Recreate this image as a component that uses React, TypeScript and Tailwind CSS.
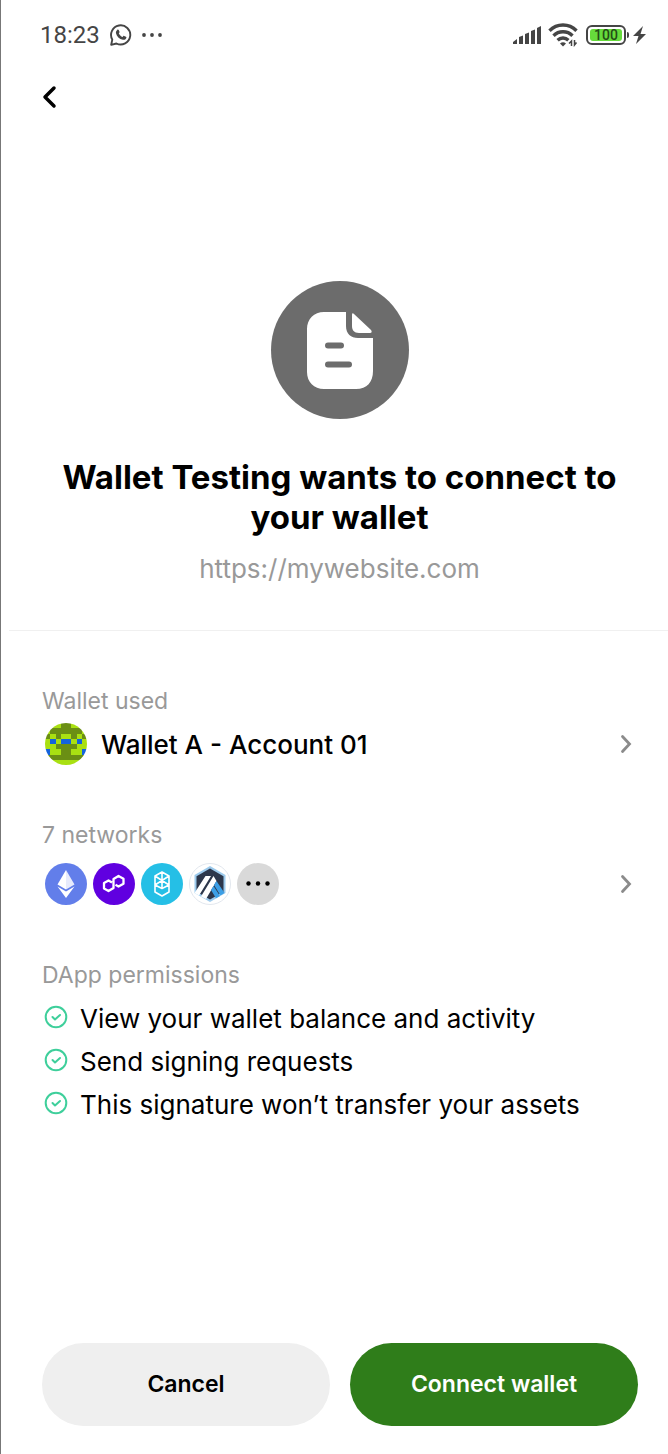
import type { ReactNode } from "react";

const permissions = [
  "View your wallet balance and activity",
  "Send signing requests",
  "This signature won’t transfer your assets",
];

// one letter per blockie pixel: l = light, d = dark, b = blue
const blockie = [
  "lllddlll",
  "lddddddl",
  "dldlldld",
  "lblbblbl",
  "llddddll",
  "bllddllb",
  "dddddddd",
  "llllllll",
];

const blockieColors: Record<string, string> = {
  l: "#a9e012",
  d: "#6b8f14",
  b: "#1463dc",
};

function StatusBar() {
  return (
    <div className="flex h-[70px] items-center justify-between pl-[39px] pr-[22px] text-[#454545]">
      <div className="flex items-center gap-2.5">
        <span className="font-[Roboto] text-[24px] leading-7">18:23</span>
        <svg width="22" height="22" viewBox="0 0 22 22" fill="none" aria-hidden="true">
          <path
            d="M1.2 20.8 2.3 15.6A9.6 9.6 0 1 1 6.4 19.5Z"
            stroke="currentColor"
            strokeWidth="1.9"
            strokeLinejoin="round"
          />
          <path
            d="M7.2 5.9c.5-.5 1.2-.4 1.5.2l.8 1.7c.2.4 0 .8-.7 1.6.8 1.6 2 2.7 3.8 3.6.8-1 1-1.3 1.5-1.1l1.8.9c.6.3.6.6.4 1.2-.5 1.4-2 2.1-3.4 1.8-3.7-.8-6.2-3.4-6.9-6.6-.3-1.4.2-2.5 1.2-3.3Z"
            fill="currentColor"
          />
        </svg>
        <svg width="20" height="4" viewBox="0 0 20 4" fill="currentColor" aria-hidden="true">
          <circle cx="2" cy="2" r="1.9" />
          <circle cx="10" cy="2" r="1.9" />
          <circle cx="18" cy="2" r="1.9" />
        </svg>
      </div>

      <div className="flex items-center">
        <svg width="30" height="20" viewBox="0 0 30 20" fill="currentColor" aria-hidden="true">
          <path d="M1 19v-2l4-3v5ZM7 19v-7l4-1.500V19ZM13 19V9l4-1.500V19ZM19 19V6l4-1.500V19ZM25 19V3l4-2v18Z" />
        </svg>
        <svg
          className="ml-1.5"
          width="30"
          height="24"
          viewBox="0 0 30 24"
          fill="none"
          stroke="currentColor"
          strokeWidth="3.4"
          aria-hidden="true"
        >
          <path d="M1.5 7.700A19 19 0 0 1 28.500 7.700" />
          <path d="M5.500 12.700A13.500 13.500 0 0 1 24.500 12.700" />
          <path d="M9.600 17.200A7.800 7.800 0 0 1 20.400 17.200" />
          <path d="M12 20.500a4.500 4.500 0 0 1 6 0l-3 3Z" fill="currentColor" stroke="none" />
          <path d="M23.500 23v-5l-2.500 2.500M26.500 17v5l2-2.500" strokeWidth="1.5" />
        </svg>
        <div className="ml-2 flex h-5 w-10 items-center justify-center rounded-md border-2 border-[#454545] p-0.5">
          <span className="flex h-full w-full items-center justify-center rounded-[3px] bg-[#66db3b] font-[Roboto] text-[14px] font-medium leading-3 text-[#234d16]">
            100
          </span>
        </div>
        <span className="ml-px h-1.5 w-0.5 rounded-r-sm bg-[#454545]" />
        <svg className="ml-1" width="13" height="20" viewBox="0 0 13 20" fill="currentColor" aria-hidden="true">
          <path d="M10 1 0 11h5.500L3 19 13 9H7.500Z" />
        </svg>
      </div>
    </div>
  );
}

function DocumentIcon() {
  return (
    <svg className="mx-auto" width="138" height="138" viewBox="0 0 138 138" aria-hidden="true">
      <circle cx="69" cy="69" r="69" fill="#6c6c6c" />
      <path
        d="M53 31h22v14c0 8 5 12 12 12h15v33c0 11-6 18-17 18H53c-10 0-17-7-17-17V48c0-10 7-17 17-17Z"
        fill="#fff"
      />
      <path d="M81 34c0-2 1-2 2-1l17 16c1 1 1 3-1 3H88c-5 0-7-3-7-7Z" fill="#fff" />
      <path d="M57 64.500h13M57 83.500h21" stroke="#6c6c6c" strokeWidth="6" strokeLinecap="round" />
    </svg>
  );
}

function Avatar() {
  return (
    <svg width="42" height="42" viewBox="0 0 8 8" className="rounded-full" shapeRendering="crispEdges" aria-hidden="true">
      {blockie.map((row, y) =>
        row.split("").map((cell, x) => (
          <rect key={`${x}-${y}`} x={x} y={y} width="1" height="1" fill={blockieColors[cell]} />
        ))
      )}
    </svg>
  );
}

function NetworkIcons() {
  return (
    <span className="flex gap-1.5">
      <svg width="42" height="42" viewBox="0 0 42 42" aria-hidden="true">
        <circle cx="21" cy="21" r="21" fill="#627eea" />
        <path d="M21 7v19.500l-8.500-5Z" fill="#fff" />
        <path d="M21 7v19.500l8.500-5Z" fill="#e7ebfc" />
        <path d="m12.500 23.500 8.500 5 8.500-5L21 35Z" fill="#fff" />
      </svg>
      <svg width="42" height="42" viewBox="0 0 42 42" aria-hidden="true">
        <circle cx="21" cy="21" r="21" fill="#6000e0" />
        <path
          d="M19 19.500 15.500 17.500 11 20v5.500l4.500 2.500 5-3v-9l5-3 5 2.700v5l-5 2.800-3-1.700"
          fill="none"
          stroke="#fff"
          strokeWidth="2.300"
          strokeLinejoin="round"
        />
      </svg>
      <svg width="42" height="42" viewBox="0 0 42 42" aria-hidden="true">
        <circle cx="21" cy="21" r="21" fill="#25bfe6" />
        <path
          d="m21 9 7 4v16l-7 4-7-4V13ZM14 13l14 9M28 13l-14 9M21 9v8M14 22l7 3.500 7-3.500M21 17v8.500"
          fill="none"
          stroke="#fff"
          strokeWidth="1.600"
          strokeLinejoin="round"
        />
      </svg>
      <svg width="42" height="42" viewBox="0 0 42 42" aria-hidden="true">
        <circle cx="21" cy="21" r="20.500" fill="#fff" stroke="#e2e7ee" />
        <path d="m21 3 15.500 9v18L21 39 5.500 30V12Z" fill="#9dcbed" />
        <path d="m21 5.500 13.500 7.700v15.600L21 36.500 7.500 28.800V13.200Z" fill="#2d374b" />
        <path d="M5.500 30 16.500 13H22L10 32.500ZM12 33.500 24.500 13l3 5L17 36Z" fill="#fff" />
        <path d="m27.500 18 8 12-4 2.500L25 22ZM24.500 23l6.500 10-4 2.300L22 27Z" fill="#3c9fe6" />
      </svg>
      <svg width="42" height="42" viewBox="0 0 42 42" aria-hidden="true">
        <circle cx="21" cy="21" r="21" fill="#d9d9d9" />
        <circle cx="11.500" cy="20.500" r="2.200" />
        <circle cx="21" cy="20.500" r="2.200" />
        <circle cx="30.500" cy="20.500" r="2.200" />
      </svg>
    </span>
  );
}

function RowButton({ label, children }: { label: string; children: ReactNode }) {
  return (
    <button type="button" aria-label={label} className="flex h-[42px] w-full items-center justify-between pl-[3px] pr-1.5">
      {children}
      <svg width="12" height="20" viewBox="0 0 12 20" fill="none" stroke="#8b8b8b" strokeWidth="2.800" aria-hidden="true">
        <path d="m2.500 2.500 7 7.500-7 7.500" strokeLinecap="round" />
      </svg>
    </button>
  );
}

function Check() {
  return (
    <svg className="mb-1" width="24" height="24" viewBox="0 0 24 24" fill="none" stroke="#3ecf9b" strokeWidth="2" aria-hidden="true">
      <circle cx="12" cy="12" r="10.300" />
      <path d="m8.500 12 2.500 2.500 5-4.500" strokeLinecap="round" strokeLinejoin="round" />
    </svg>
  );
}

export default function App() {
  return (
    <main className="flex min-h-screen flex-col border-l border-[#777] bg-white font-[Inter,sans-serif] text-black">
      <StatusBar />

      <header className="px-10 pt-3.5">
        <button type="button" aria-label="Back" className="block">
          <svg width="16" height="26" viewBox="0 0 16 26" fill="none" stroke="currentColor" strokeWidth="3.500" aria-hidden="true">
            <path d="M13 4 4 13l9 9" strokeLinecap="round" strokeLinejoin="round" />
          </svg>
        </button>
      </header>

      <section className="ml-2 border-b border-[#f0f0f0] pb-[45px] pl-0.5 pt-[171px] text-center">
        <DocumentIcon />
        <h1 className="mx-auto mt-[38px] max-w-[600px] text-[33px] font-bold leading-10">
          Wallet Testing wants to connect to your wallet
        </h1>
        <p className="mt-4 text-[26px] leading-8 text-[#999]">https://mywebsite.com</p>
      </section>

      <section className="pl-[41px] pr-[30px] pt-[54px]">
        <h2 className="text-[23px] leading-8 text-[#999]">Wallet used</h2>
        <div className="mt-1.5">
          <RowButton label="Wallet A - Account 01">
            <span className="flex items-center gap-3.5 text-[26px] font-medium">
              <Avatar />
              Wallet A - Account 01
            </span>
          </RowButton>
        </div>

        <h2 className="mt-[54px] text-[23px] leading-8 text-[#999]">7 networks</h2>
        <div className="mt-3">
          <RowButton label="7 networks">
            <NetworkIcons />
          </RowButton>
        </div>

        <h2 className="mt-[54px] text-[23px] leading-8 text-[#999]">DApp permissions</h2>
        <ul className="mt-1.5">
          {permissions.map((permission) => (
            <li key={permission} className="flex h-[43px] items-center gap-3 pl-0.5 text-[26px]">
              <Check />
              {permission}
            </li>
          ))}
        </ul>
      </section>

      <footer className="mt-auto grid grid-cols-2 gap-5 pb-7 pl-[41px] pr-[30px]">
        <button type="button" className="h-[83px] rounded-full bg-[#efefef] text-[23px] font-semibold">
          Cancel
        </button>
        <button type="button" className="h-[83px] rounded-full bg-[#2f7d1a] text-[23px] font-semibold text-white">
          Connect wallet
        </button>
      </footer>
    </main>
  );
}
